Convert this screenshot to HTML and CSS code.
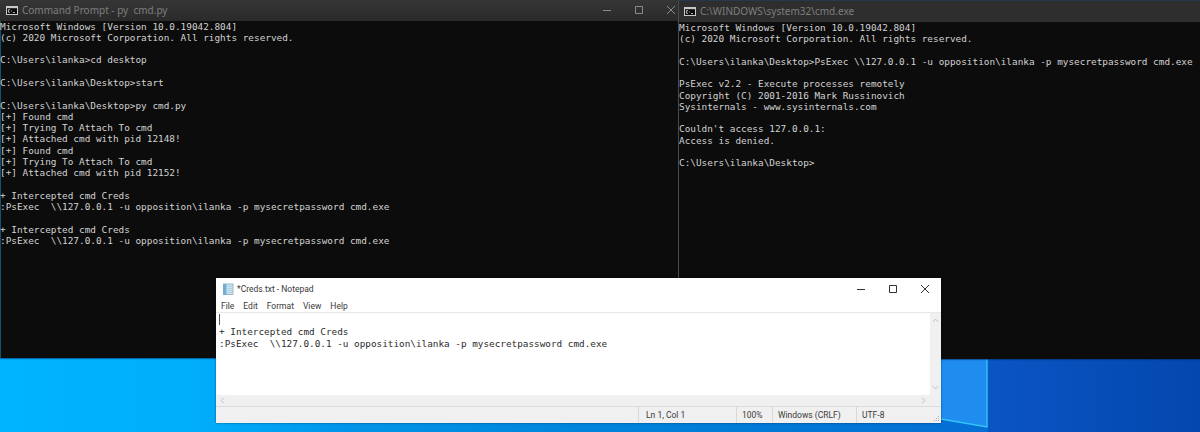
FILE: index.html
```html
<!DOCTYPE html>
<html lang="en">
<head>
<meta charset="utf-8">
<title>Desktop</title>
<link rel="stylesheet" href="styles.css">
</head>
<body>
<main class="desktop">
  <svg class="logo" viewBox="0 0 47 69" aria-hidden="true">
    <path class="logo-pane" d="M0 0H46V68L0 60Z"/>
    <path class="logo-edge" d="M46 0V68L0 60"/>
  </svg>

  <section class="console console-left">
    <header class="console-title">
      <svg class="cmd-icon" viewBox="0 0 12 9" aria-hidden="true">
        <rect x="0.5" y="0.5" width="11" height="8" fill="#0c0c0c" stroke="#c8c8c8"/>
        <rect x="1" y="1" width="10" height="1.2" fill="#c8c8c8"/>
        <path d="M4 3.7H2.4V6.3H4M5.4 4V4.5M5.4 5.6V6.1M7 6.6H9" fill="none" stroke="#e6e6e6" stroke-width=".8"/>
      </svg>
      <span class="console-name">Command Prompt - py&nbsp; cmd.py</span>
      <div class="controls">
        <svg viewBox="0 0 8 8" aria-hidden="true"><path d="M0 4.5H8"/></svg>
        <svg viewBox="0 0 8 8" aria-hidden="true"><path d="M.5.5H7.5V7.5H.5Z"/></svg>
        <svg viewBox="0 0 8 8" aria-hidden="true"><path d="M0 0L8 8M8 0L0 8"/></svg>
      </div>
    </header>
    <pre class="console-text">Microsoft Windows [Version 10.0.19042.804]
(c) 2020 Microsoft Corporation. All rights reserved.

C:\Users\ilanka>cd desktop

C:\Users\ilanka\Desktop>start

C:\Users\ilanka\Desktop>py cmd.py
[+] Found cmd
[+] Trying To Attach To cmd
[+] Attached cmd with pid 12148!
[+] Found cmd
[+] Trying To Attach To cmd
[+] Attached cmd with pid 12152!

+ Intercepted cmd Creds
:PsExec  \\127.0.0.1 -u opposition\ilanka -p mysecretpassword cmd.exe

+ Intercepted cmd Creds
:PsExec  \\127.0.0.1 -u opposition\ilanka -p mysecretpassword cmd.exe</pre>
  </section>

  <section class="console console-right">
    <header class="console-title">
      <svg class="cmd-icon" viewBox="0 0 12 9" aria-hidden="true">
        <rect x="0.5" y="0.5" width="11" height="8" fill="#0c0c0c" stroke="#c8c8c8"/>
        <rect x="1" y="1" width="10" height="1.2" fill="#c8c8c8"/>
        <path d="M4 3.7H2.4V6.3H4M5.4 4V4.5M5.4 5.6V6.1M7 6.6H9" fill="none" stroke="#e6e6e6" stroke-width=".8"/>
      </svg>
      <span class="console-name">C:\WINDOWS\system32\cmd.exe</span>
    </header>
    <pre class="console-text">Microsoft Windows [Version 10.0.19042.804]
(c) 2020 Microsoft Corporation. All rights reserved.

C:\Users\ilanka\Desktop>PsExec \\127.0.0.1 -u opposition\ilanka -p mysecretpassword cmd.exe

PsExec v2.2 - Execute processes remotely
Copyright (C) 2001-2016 Mark Russinovich
Sysinternals - www.sysinternals.com

Couldn't access 127.0.0.1:
Access is denied.

C:\Users\ilanka\Desktop></pre>
  </section>

  <section class="notepad">
    <header class="np-title">
      <svg class="np-icon" viewBox="0 0 12 12" aria-hidden="true">
        <rect x="1.5" y="1" width="9.5" height="10.5" fill="#cfe3ee" stroke="#7d9fb4" stroke-width=".7"/>
        <rect x="1" y="1" width="3.5" height="10.5" fill="#6fb0d2"/>
        <path d="M5.5 3.5H10M5.5 5.5H10M5.5 7.5H10M5.5 9.5H10" stroke="#a3c3d4" stroke-width=".6"/>
      </svg>
      <span class="np-name">*Creds.txt - Notepad</span>
      <div class="np-controls">
        <svg viewBox="0 0 8 8" aria-hidden="true"><path d="M0 4.5H8"/></svg>
        <svg viewBox="0 0 8 8" aria-hidden="true"><path d="M.5.5H7.5V7.5H.5Z"/></svg>
        <svg viewBox="0 0 8 8" aria-hidden="true"><path d="M0 0L8 8M8 0L0 8"/></svg>
      </div>
    </header>
    <nav class="np-menu"><span>File</span><span>Edit</span><span>Format</span><span>View</span><span>Help</span></nav>
    <div class="np-body">
      <div class="np-editor">
        <i class="np-caret"></i>
        <pre class="np-text">

+ Intercepted cmd Creds
:PsExec  \\127.0.0.1 -u opposition\ilanka -p mysecretpassword cmd.exe</pre>
      </div>
      <div class="np-vscroll">
        <svg viewBox="0 0 8 5" aria-hidden="true"><path d="M1 4L4 1L7 4"/></svg>
        <svg viewBox="0 0 8 5" aria-hidden="true"><path d="M1 1L4 4L7 1"/></svg>
      </div>
    </div>
    <div class="np-hscroll">
      <svg viewBox="0 0 5 8" aria-hidden="true"><path d="M4 1L1 4L4 7"/></svg>
      <svg viewBox="0 0 5 8" aria-hidden="true"><path d="M1 1L4 4L1 7"/></svg>
    </div>
    <footer class="np-status">
      <span class="st-fill"></span>
      <span class="st-pos">Ln 1, Col 1</span>
      <span class="st-zoom">100%</span>
      <span class="st-eol">Windows (CRLF)</span>
      <span class="st-enc">UTF-8</span>
      <svg class="st-grip" viewBox="0 0 7 7" aria-hidden="true"><path d="M5 1h1v1H5zM3 3h1v1H3zM5 3h1v1H5zM1 5h1v1H1zM3 5h1v1H3zM5 5h1v1H5z"/></svg>
    </footer>
  </section>
</main>
</body>
</html>
```
FILE: styles.css
```css
* { box-sizing: border-box; }
html, body { margin: 0; height: 100%; overflow: hidden; }

.desktop {
  position: relative;
  width: 1200px;
  height: 432px;
  overflow: hidden;
  background:
    linear-gradient(90deg, #00b4ff 0, #00aefb 200px, #0096ea 340px, #0088e0 520px, #0078d6 800px, #066ed4 987px, #0a54c4 989px, #0448ae 1200px);
}

.logo {
  position: absolute;
  left: 941px;
  top: 359px;
  width: 47px;
  height: 69px;
  overflow: visible;
}
.logo-pane { fill: #1f8df0; }
.logo-edge { fill: none; stroke: #35c6f6; stroke-width: 1.3; }

.console {
  position: absolute;
  top: 0;
  display: flex;
  flex-direction: column;
  background: #0c0c0c;
}
.console-left { left: 0; width: 678px; height: 358px; box-shadow: inset 1px 0 0 #17506e, 0 1px 1px rgba(0, 40, 90, .5); }
.console-right { left: 678px; width: 522px; height: 359px; border-left: 1px solid #4a4a4a; border-top: 1px solid #26384e; box-shadow: 0 1px 1px rgba(0, 40, 90, .5); }

.console-title {
  flex: none;
  display: flex;
  align-items: center;
  height: 20.5px;
  padding-left: 6px;
  background: linear-gradient(#363636, #2a2a2a);
}
.console-right .console-title { height: 20.8px; padding-left: 5px; background: #2e2e2e; }
.cmd-icon { width: 12px; height: 9px; flex: none; }
.console-name {
  margin-left: 4px;
  font: 10px/1 "Noto Sans", sans-serif;
  color: #7e7e7e;
  white-space: nowrap;
}
.controls {
  margin-left: auto;
  display: flex;
  gap: 24px;
  padding-right: 3px;
}
.controls svg, .np-controls svg {
  width: 8px;
  height: 8px;
  fill: none;
  stroke-width: 1;
  stroke: #8a8a8a;
}

.console-text {
  margin: 0;
  padding: 0;
  font: 9.38px/11.29px "DejaVu Sans Mono", monospace;
  color: #d2d2d2;
  white-space: pre;
}

.notepad {
  position: absolute;
  left: 216px;
  top: 278px;
  width: 725px;
  height: 145px;
  display: flex;
  flex-direction: column;
  background: #fff;
  box-shadow: 0 0 2px rgba(0, 0, 0, .5);
  font-family: Roboto, sans-serif;
  color: #3a3a3a;
}
.np-title {
  flex: none;
  display: flex;
  align-items: center;
  height: 21px;
  padding-left: 6px;
}
.np-icon { width: 12px; height: 12px; flex: none; }
.np-name { margin-left: 3px; font-size: 8.5px; white-space: nowrap; }
.np-controls {
  margin-left: auto;
  display: flex;
  gap: 24px;
  padding-right: 12px;
}
.np-controls svg { stroke: #333; }

.np-menu {
  flex: none;
  display: flex;
  align-items: center;
  gap: 9px;
  height: 14px;
  padding-left: 5px;
  font-size: 8.5px;
  border-bottom: 1px solid #e8e8e8;
}

.np-body { flex: 1; min-height: 0; display: flex; }
.np-editor { position: relative; flex: 1; padding-left: 3px; }
.np-caret {
  position: absolute;
  left: 3px;
  top: 1px;
  width: 1px;
  height: 11px;
  background: #555;
}
.np-text {
  margin: 0;
  font: 9.36px/12.7px "DejaVu Sans Mono", monospace;
  color: #2b2b2b;
  white-space: pre;
}
.np-vscroll {
  flex: none;
  width: 11px;
  background: #f0f0f0;
  display: flex;
  flex-direction: column;
  justify-content: space-between;
  align-items: center;
  padding: 5px 0 5px;
}
.np-vscroll svg { width: 7px; height: 5px; fill: none; stroke: #b8b8b8; stroke-width: 1; }

.np-hscroll {
  flex: none;
  height: 11px;
  background: #f0f0f0;
  display: flex;
  justify-content: space-between;
  align-items: center;
  padding: 0 15px 0 4px;
}
.np-hscroll svg { width: 5px; height: 7px; fill: none; stroke: #b8b8b8; stroke-width: 1; }

.np-status {
  position: relative;
  flex: none;
  height: 17px;
  display: flex;
  align-items: center;
  background: #f0f0f0;
  border-top: 1px solid #dcdcdc;
  font-size: 8.5px;
}
.np-status span { height: 100%; display: flex; align-items: center; border-left: 1px solid #d9d9d9; padding-left: 5px; white-space: nowrap; }
.np-status .st-fill { width: 422px; border-left: 0; padding: 0; }
.st-pos { width: 98px; padding-left: 7px !important; }
.st-zoom { width: 36px; }
.st-eol { width: 84px; }
.st-enc { width: 85px; }
.st-grip { position: absolute; right: 1px; bottom: 1px; width: 7px; height: 7px; fill: #b0b0b0; }
```
